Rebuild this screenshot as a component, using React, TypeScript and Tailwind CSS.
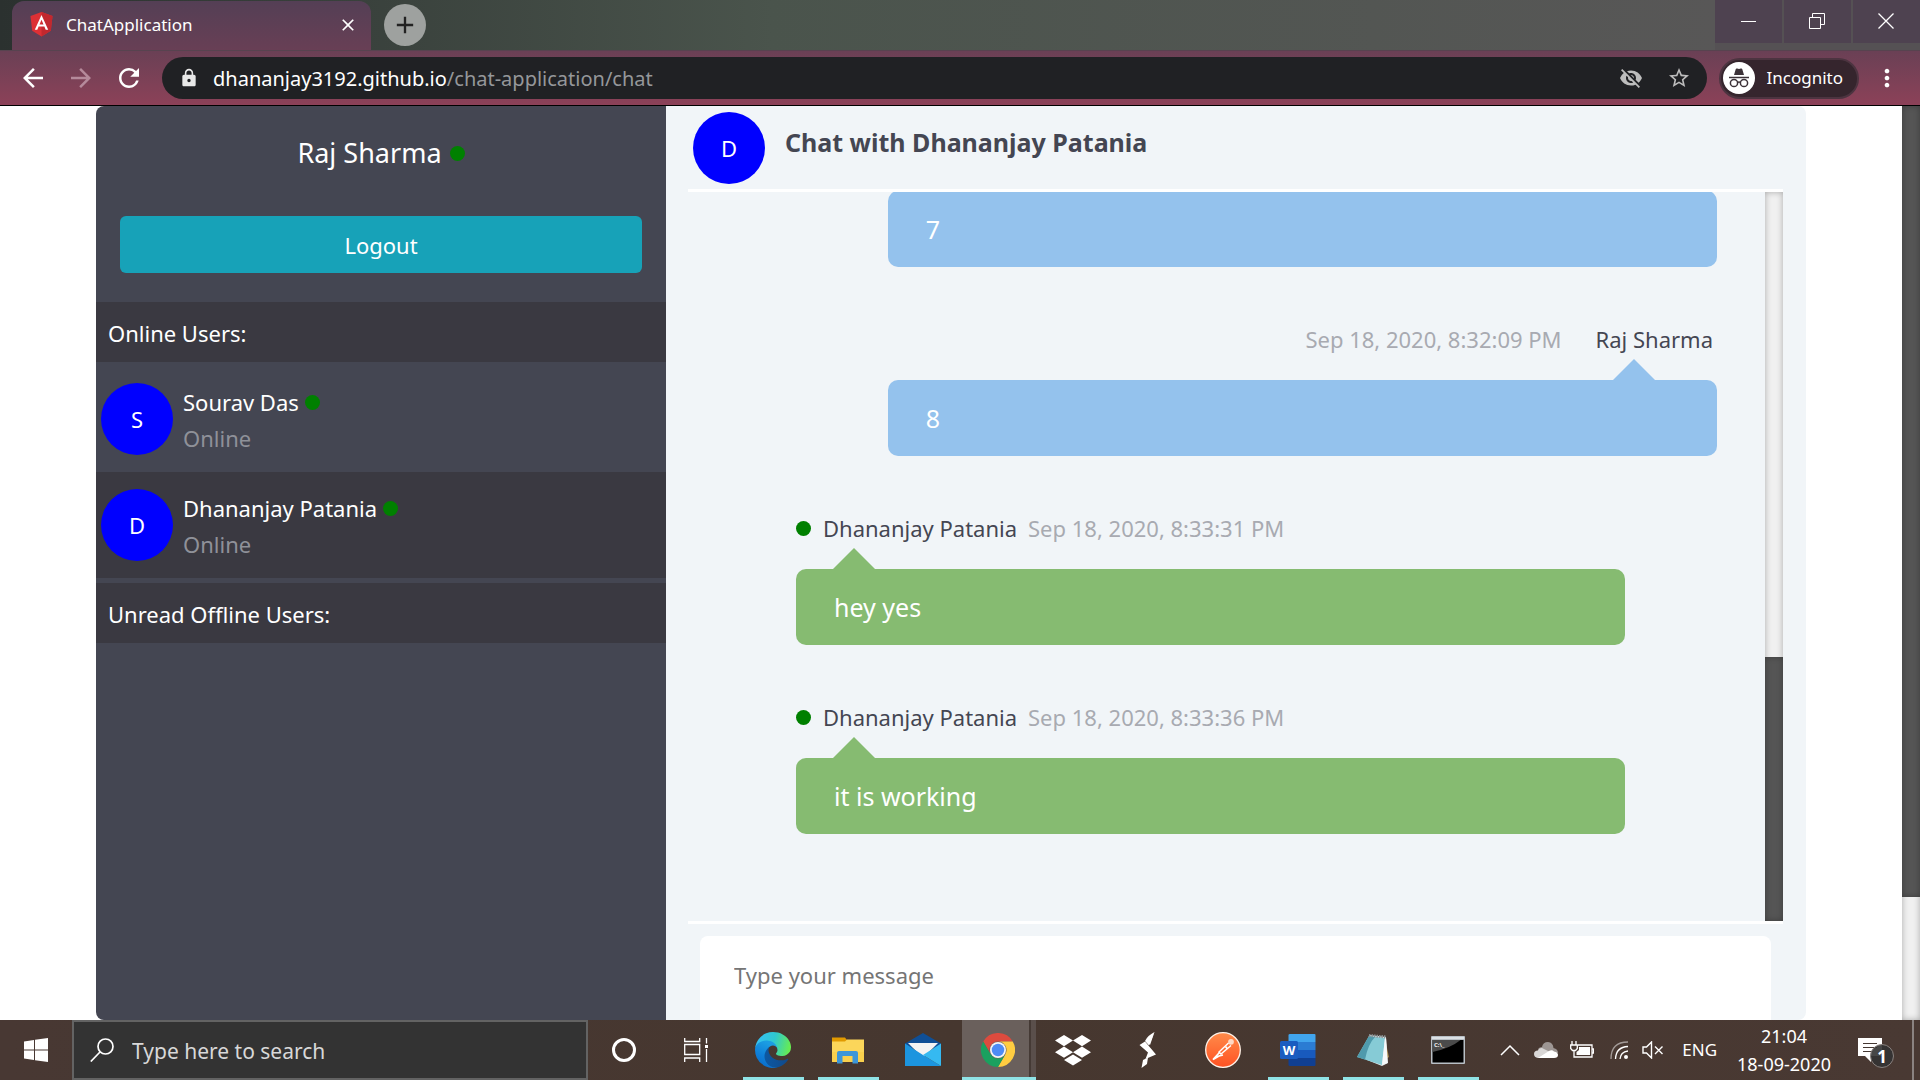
import React from "react";
import { MdArrowBack, MdArrowForward, MdRefresh, MdLock, MdVisibilityOff, MdStarBorder, MdMoreVert, MdClose, MdAdd } from "react-icons/md";

const Dot = () => <span className="inline-block size-[15px] shrink-0 rounded-full bg-[#008000]" />;

const Avatar = ({ letter }: { letter: string }) => (
  <span className="flex size-18 shrink-0 items-center justify-center rounded-full bg-[#0000ff] text-[22px] text-white">
    {letter}
  </span>
);

/* ---------- Browser chrome ---------- */

const AngularIcon = () => (
  <svg viewBox="0 0 24 26" className="h-[25px] w-[23px]">
    <path d="M12 0 23.5 4 21.7 19.5 12 25.5 2.3 19.5.5 4Z" fill="#dd3035" />
    <path d="M12 0 23.5 4 21.7 19.5 12 25.5Z" fill="#c2282e" />
    <path
      fillRule="evenodd"
      d="M12 3 5 18.5h2.6L9 15h6l1.400 3.500H19ZM12 8l2.100 4.900H9.900Z"
      fill="#fff"
    />
  </svg>
);

const IncognitoIcon = () => (
  <svg viewBox="0 0 32 32" className="size-8">
    <circle cx="16" cy="16" r="16" fill="#fff" />
    <path d="M11 13 12.700 7.200q.4-1.100 1.500-.6l1.800.5 1.800-.5q1.100-.5 1.500.6L21 13Z" fill="#3c3238" />
    <path d="M6 15.500h20" stroke="#3c3238" strokeWidth="1.500" />
    <g fill="none" stroke="#3c3238" strokeWidth="1.500">
      <circle cx="11" cy="21" r="3.600" />
      <circle cx="21" cy="21" r="3.600" />
      <path d="M14.500 20.500q1.500-1 3 0" />
    </g>
  </svg>
);

function TabStrip() {
  return (
    <div className="flex h-[50px] items-start bg-[#555154]">
      <div className="flex h-full min-w-0 flex-1 bg-linear-to-r from-[#2b312f] from-0% via-[#4a544c] via-45% to-[#585757]">
        <div className="mt-px ml-3 flex h-[49px] w-[359px] items-center rounded-t-xl bg-linear-to-b from-[#543f55] to-[#683f55] pr-[13px] pb-0.5 pl-[18px]">
          <AngularIcon />
          <span className="ml-[13px] flex-1 text-[17px] text-white">ChatApplication</span>
          <button aria-label="Close tab" className="text-white">
            <MdClose className="size-5" />
          </button>
        </div>
        <button
          aria-label="New tab"
          className="mt-1 ml-[13px] flex size-[42px] items-center justify-center rounded-full bg-[#9ea19f] text-[#222]"
        >
          <MdAdd className="size-7" />
        </button>
      </div>
      <div className="flex gap-0.5 text-white">
        <button aria-label="Minimize" className="flex h-[43px] w-[67px] items-center justify-center bg-[#4e4250] pb-0.5">
          <svg viewBox="0 0 16 16" className="size-4"><path d="M0 8.500h15" stroke="currentColor" /></svg>
        </button>
        <button aria-label="Restore" className="flex h-[43px] w-[67px] items-center justify-center bg-[#4e4250] pr-0.5 pb-0.5">
          <svg viewBox="0 0 16 16" className="size-4" fill="none" stroke="currentColor">
            <path d="M.5 4.500h11v11H.5ZM3.500 4V.5h12v11H12" />
          </svg>
        </button>
        <button aria-label="Close" className="flex h-[43px] w-[67px] items-center justify-center bg-[#4e4250] pr-0.5 pb-0.5">
          <svg viewBox="0 0 16 16" className="size-4"><path d="m.5.500 15 15m0-15-15 15" stroke="currentColor" strokeWidth="1.300" /></svg>
        </button>
      </div>
    </div>
  );
}

function Toolbar() {
  return (
    <div className="flex h-14 items-center border-t border-b border-t-[#57434f] border-b-black bg-linear-to-b from-[#6a4055] to-[#8c4158] pl-[18px] text-white">
      <button aria-label="Back"><MdArrowBack className="size-[30px]" /></button>
      <button aria-label="Forward" className="ml-[18px] text-[#b58a9b]"><MdArrowForward className="size-[30px]" /></button>
      <button aria-label="Reload" className="ml-[18px]"><MdRefresh className="size-[30px]" /></button>
      <div className="ml-[18px] flex h-[42px] flex-1 items-center rounded-full bg-[#202124] pr-4 pl-[17px]">
        <MdLock className="size-5 text-[#e8e8e8]" />
        <div role="textbox" aria-label="Address" className="ml-[14px] flex-1 pt-0.5 text-[20px] text-[#95979a]">
          <span className="text-white">dhananjay3192.github.io</span>/chat-application/chat
        </div>
        <button aria-label="Third-party cookies blocked" className="text-[#bdbdbd]"><MdVisibilityOff className="size-6" /></button>
        <button aria-label="Bookmark this page" className="ml-6 text-[#bdbdbd]"><MdStarBorder className="size-6" /></button>
      </div>
      <button className="ml-3 flex h-[41px] items-center gap-3 rounded-full border-2 border-[#4c3440] bg-[#35252d] pr-3.5 pl-0.5 text-[17px]">
        <IncognitoIcon />
        Incognito
      </button>
      <button aria-label="Menu" className="mr-[19px] ml-3.5"><MdMoreVert className="size-7" /></button>
    </div>
  );
}

/* ---------- Chat page ---------- */

const users = [
  { name: "Sourav Das", status: "Online", row: "h-[110px] pt-[21px]" },
  { name: "Dhananjay Patania", status: "Online", row: "h-[106px] bg-[#3a3941] pt-[17px]" },
];

function Sidebar() {
  return (
    <aside className="w-1/3 shrink-0 rounded-l-lg bg-[#444652] text-[22px] text-white">
      <div className="flex h-[196px] flex-col px-6 pt-7">
        <h1 className="flex items-center justify-center gap-2 text-[27px] leading-[38px]">
          Raj Sharma <Dot />
        </h1>
        <button className="mt-11 flex h-[57px] items-center justify-center rounded-md bg-[#17a2b8] pt-0.5">Logout</button>
      </div>
      <h2 className="flex h-[60px] items-center bg-[#3a3941] px-3 pt-0.5">Online Users:</h2>
      <ul>
        {users.map((u) => (
          <li key={u.name}>
            <button className={"flex w-full items-start gap-2.5 pl-[5px] text-left " + u.row}>
              <Avatar letter={u.name[0]} />
              <span className="flex flex-col pt-px leading-9">
                <span className="flex items-center gap-1.5">{u.name} <Dot /></span>
                <span className="text-[#8f9199]">{u.status}</span>
              </span>
            </button>
          </li>
        ))}
      </ul>
      <h2 className="mt-[5px] flex h-[60px] items-center bg-[#3a3941] px-3 pt-0.5">Unread Offline Users:</h2>
    </aside>
  );
}

type Message = { text: string; mine: boolean; author?: string; time?: string };

const messages: Message[] = [
  { text: "7", mine: true },
  { text: "8", mine: true, author: "Raj Sharma", time: "Sep 18, 2020, 8:32:09 PM" },
  { text: "hey yes", mine: false, author: "Dhananjay Patania", time: "Sep 18, 2020, 8:33:31 PM" },
  { text: "it is working", mine: false, author: "Dhananjay Patania", time: "Sep 18, 2020, 8:33:36 PM" },
];

function MessageItem({ m }: { m: Message }) {
  return (
    <li className={"mb-[45px] flex shrink-0 " + (m.mine ? "justify-end" : "justify-start")}>
      <div className={"w-[77%] " + (m.mine ? "mr-12" : "ml-[108px]")}>
        {m.author &&
          (m.mine ? (
            <div className="flex h-[68px] items-start justify-end gap-[34px] pt-[9px] pr-1 text-[22px] leading-9 text-[#444652]">
              <span className="text-[#a8aab1]">{m.time}</span>
              <span>{m.author}</span>
            </div>
          ) : (
            <div className="flex h-[68px] items-start pt-[9px] text-[22px] leading-9 text-[#444652]">
              <span className="flex h-9 items-center"><Dot /></span>
              <span className="ml-3">{m.author}</span>
              <span className="ml-[11px] text-[#a8aab1]">{m.time}</span>
            </div>
          ))}
        <div
          className={
            "relative flex h-[76px] items-center rounded-[10px] pt-0.5 pl-[38px] text-[25px] text-white " +
            (m.mine ? "bg-[#94c2ed]" : "bg-[#86bb71]")
          }
        >
          {m.author && (
            <span
              className={
                "absolute bottom-full border-x-[21px] border-b-[21px] border-x-transparent " +
                (m.mine ? "right-[62px] border-b-[#94c2ed]" : "left-[37px] border-b-[#86bb71]")
              }
            />
          )}
          {m.text}
        </div>
      </div>
    </li>
  );
}

function Chat() {
  return (
    <main className="flex min-w-0 flex-1 flex-col rounded-r-lg bg-[#f1f5f8] pr-[23px] pl-[22px]">
      <header className="flex h-[86px] shrink-0 items-start gap-5 border-b-[3px] border-white pt-1.5 pl-[5px]">
        <Avatar letter="D" />
        <h2 className="pt-3 text-[25px] leading-9 font-bold text-[#444652]">Chat with Dhananjay Patania</h2>
      </header>
      <div className="flex min-h-0 flex-1">
        <ul className="flex min-w-0 flex-1 flex-col justify-end overflow-hidden pb-[42px]">
          {messages.map((m) => <MessageItem key={m.text} m={m} />)}
        </ul>
        <div className="flex w-[18px] flex-col bg-[#f0f0f0] shadow-[inset_0_0_6px_rgba(0,0,0,0.3)]">
          <div className="mt-auto h-[264px] bg-[#555] shadow-[inset_0_0_6px_rgba(0,0,0,0.3)]" />
        </div>
      </div>
      <form className="flex h-[99px] shrink-0 border-t-[3px] border-white px-3 pt-3">
        <input
          aria-label="Message"
          placeholder="Type your message"
          className="min-w-0 flex-1 rounded-t-lg bg-white px-[34px] pb-1.5 text-[22px] outline-none placeholder:text-[#757575]"
        />
      </form>
    </main>
  );
}

/* ---------- Taskbar ---------- */

const EdgeIcon = () => (
  <svg viewBox="4.600 5 256 256" className="size-9">
    <defs>
      <linearGradient id="e1" x1="63" y1="178" x2="241" y2="178" gradientUnits="userSpaceOnUse"><stop stopColor="#0c59a4" /><stop offset="1" stopColor="#114a8b" /></linearGradient>
      <linearGradient id="e2" x1="120" y1="95" x2="50" y2="240" gradientUnits="userSpaceOnUse"><stop stopColor="#1b9de2" /><stop offset=".6" stopColor="#0f7fd8" /><stop offset="1" stopColor="#0a6fcb" /></linearGradient>
      <linearGradient id="e3" x1="20" y1="60" x2="250" y2="120" gradientUnits="userSpaceOnUse"><stop stopColor="#35c1f1" /><stop offset=".5" stopColor="#2fc8cf" /><stop offset="1" stopColor="#66eb52" /></linearGradient>
    </defs>
    <path fill="url(#e1)" d="M235.680 195.460a93.730 93.730 0 0 1-10.540 4.710 101.870 101.870 0 0 1-35.900 6.460c-47.320 0-88.540-32.550-88.540-74.320A31.480 31.480 0 0 1 117.130 105c-42.800 1.800-53.800 46.400-53.800 72.530 0 73.880 68.090 81.370 82.760 81.370 7.910 0 19.840-2.300 27-4.560l1.310-.44a128.340 128.340 0 0 0 66.600-52.800 4 4 0 0 0-5.320-5.640z" />
    <path fill="url(#e2)" d="M110.340 246.340A79.200 79.200 0 0 1 87.600 225a80.720 80.720 0 0 1 29.530-120c3.120-1.470 8.450-4.130 15.540-4a32.350 32.350 0 0 1 25.690 13 31.880 31.880 0 0 1 6.360 18.660c0-.21 24.460-79.600-80-79.600-43.900 0-80 41.660-80 78.210a130.150 130.150 0 0 0 12.110 56 128 128 0 0 0 156.380 67.110 75.550 75.550 0 0 1-62.780-8z" />
    <path fill="url(#e3)" d="M156.940 153.460c-.81 1.050-3.300 2.500-3.300 5.660 0 2.610 1.700 5.120 4.720 7.230 14.380 10 41.490 8.680 41.560 8.680a59.560 59.560 0 0 0 30.270-8.350 61.380 61.380 0 0 0 30.430-52.880c.26-22.410-8-37.310-11.340-43.910C228.090 28.760 182.350 5 132.610 5a128 128 0 0 0-128 126.200c.48-36.540 36.800-66.050 80-66.050 3.500 0 23.460.34 42 10.070 16.340 8.580 24.900 18.940 30.850 29.210 6.180 10.670 7.280 24.150 7.280 29.520s-2.740 13.330-7.800 19.510z" />
  </svg>
);

const FolderIcon = () => (
  <svg viewBox="0 0 36 36" className="size-9">
    <path d="M2 5.500h13l2 2.500v4H2Z" fill="#e19a00" />
    <path d="M2 9.500h13l2-2h17V30H2Z" fill="#fbd65a" />
    <path d="M2 20h32v10H2Z" fill="#f9cb45" opacity=".6" />
    <path d="M7 31.500V21q0-2 2-2h17q2 0 2 2v10.500h-5.500V24h-10v7.500Z" fill="#3c96d8" />
  </svg>
);

const MailIcon = () => (
  <svg viewBox="0 0 36 36" className="size-9">
    <path d="M0 11.500 18 1l18 10.500V16H0Z" fill="#0f4f96" />
    <path d="M3 11h30L18 26Z" fill="#f3f3f3" />
    <path d="M0 11.500 18 23 36 34H0Z" fill="#1c95df" />
    <path d="M36 11.500V34L18 23Z" fill="#35b9f1" />
  </svg>
);

const ChromeIcon = () => (
  <svg viewBox="0 0 48 48" className="size-[34px]">
    <path fill="#dc4b3e" d="M24 12H44.800A24 24 0 0 0 3.200 12L13.600 30A12 12 0 0 1 24 12Z" />
    <path fill="#ffcd41" d="M44.800 12A24 24 0 0 1 24 48L34.400 30A12 12 0 0 0 24 12Z" />
    <path fill="#1aa15f" d="M3.200 12A24 24 0 0 0 24 48L34.400 30A12 12 0 0 1 13.600 30Z" />
    <circle cx="24" cy="24" r="11.300" fill="#f4f4f4" />
    <circle cx="24" cy="24" r="8.800" fill="#4d8bf5" />
  </svg>
);

const DropboxIcon = () => (
  <svg viewBox="0 0 36 32" className="h-8 w-9" fill="#fff">
    <path d="m9 1 9 5.500-9 5.700L0 6.500ZM27 1l9 5.500-9 5.700-9-5.700ZM9 12.500l9 5.700-9 5.600-9-5.600ZM27 12.500l9 5.700-9 5.600-9-5.600ZM18 20.400l9 5.500-9 5.600-9-5.600Z" />
  </svg>
);

const BoltIcon = () => (
  <svg viewBox="0 0 18 36" className="h-9 w-[18px]" fill="#fff">
    <path d="M6 9.500.5 13 9 20.500 6.500 27 17 22.500Z" />
    <path d="M15.500 0Q8.500 3.500 6 9l4 4.500Z" />
    <path d="M15.500 0 11 13l-1.500-2Z" />
    <path d="M2.500 36 4 28 9 25.500 8 32Z" />
  </svg>
);

const PostmanIcon = () => (
  <svg viewBox="0 0 36 36" className="size-9">
    <defs><linearGradient id="pm" x1="0" y1="0" x2="0" y2="1"><stop stopColor="#ff8b4a" /><stop offset="1" stopColor="#ff5223" /></linearGradient></defs>
    <circle cx="18" cy="18" r="17.300" fill="url(#pm)" stroke="#fff2e8" strokeWidth="1.300" />
    <circle cx="26" cy="9.800" r="2.900" fill="#ffd9c4" />
    <path d="M23.500 11 14 20l2 2 10-8.500" fill="none" stroke="#fff" strokeWidth="1.400" />
    <path d="m20.500 14.500 2 2.500M14.500 20.500 8 27.500l6-3.500 4-1" fill="none" stroke="#fff" strokeWidth="1.700" />
  </svg>
);

const WordIcon = () => (
  <svg viewBox="0 0 36 36" className="size-9">
    <path d="M10 2h24.500q1 0 1 1v7H8.500V3q0-1 1.500-1Z" fill="#41a5ee" />
    <path d="M8.500 10h27v8h-27Z" fill="#2b7cd3" />
    <path d="M8.500 18h27v8h-27Z" fill="#185abd" />
    <path d="M8.500 26h27v7q0 1-1 1H10q-1.500 0-1.500-1Z" fill="#103f91" />
    <rect y="9" width="18" height="18" rx="1.500" fill="#1a5cc0" />
    <text x="9" y="22.500" textAnchor="middle" fontSize="13" fontWeight="700" fill="#fff">W</text>
  </svg>
);

const NotepadIcon = () => (
  <svg viewBox="0 0 36 36" className="size-9">
    <path d="m30 7 4 18-6 4Z" fill="#a98a4b" />
    <path d="M14 3 31 5 33 31 27 34 12 28Z" fill="#e4eaec" />
    <path d="M14 4 30 6 27 33 2 25Z" fill="#86cbd6" />
    <path d="M14 4 2 25l8 2.500Q13 12 20 5Z" fill="#4f9aac" />
    <path d="M30 6 27 33l5.500-2L31 6Z" fill="#f7f9fa" />
    <path d="M14 3.500 31 5" stroke="#8a9396" strokeWidth="3" strokeDasharray="1.500 1" />
  </svg>
);

const CmdIcon = () => (
  <svg viewBox="0 0 34 28" className="h-7 w-[34px]">
    <rect width="34" height="28" rx="1" fill="#b9c0c6" />
    <path d="M1 1h32v2H1Z" fill="#dce1e5" />
    <path d="M1.500 4h31v22.500h-31Z" fill="#000" />
    <path d="M1.500 4h28Q20 12 1.500 16Z" fill="#4b4b4b" />
    <text x="3" y="10.500" fontSize="6" fontWeight="700" fill="#eee">C:\_</text>
  </svg>
);

const apps = [
  { name: "Microsoft Edge", icon: <EdgeIcon />, open: true },
  { name: "File Explorer", icon: <FolderIcon />, open: true },
  { name: "Mail", icon: <MailIcon />, open: false },
  { name: "Google Chrome", icon: <ChromeIcon />, open: true, active: true },
  { name: "Dropbox", icon: <DropboxIcon />, open: false },
  { name: "Streaming", icon: <BoltIcon />, open: false },
  { name: "Postman", icon: <PostmanIcon />, open: false },
  { name: "Word", icon: <WordIcon />, open: true },
  { name: "Notepad", icon: <NotepadIcon />, open: true },
  { name: "Command Prompt", icon: <CmdIcon />, open: true },
];

function Taskbar() {
  return (
    <footer className="flex h-15 shrink-0 items-stretch bg-linear-to-r from-[#483833] via-[#46372f] via-50% to-[#493933] text-white">
      <button aria-label="Start" className="flex w-18 items-center justify-center">
        <svg viewBox="0 0 24 24" className="size-6" fill="#fff">
          <path d="M0 3.400 10 2v9.500H0ZM11 1.800 24 0v11.500H11ZM0 12.500h10V22L0 20.600ZM11 12.500h13V24l-13-1.800Z" />
        </svg>
      </button>
      <label className="flex w-[516px] items-center border-2 border-[#636363] bg-[#333] pl-4">
        <svg viewBox="0 0 24 24" className="size-6 shrink-0" fill="none" stroke="#fff" strokeWidth="1.700">
          <circle cx="15.500" cy="8.500" r="7.500" />
          <path d="M10 14 .8 23.500" />
        </svg>
        <input aria-label="Search" placeholder="Type here to search" className="ml-[18px] min-w-0 flex-1 pt-1 text-[21px] outline-none placeholder:text-[#d8d8d8]" />
      </label>
      <button aria-label="Cortana" className="flex w-[72px] items-center justify-center">
        <span className="size-6 rounded-full border-[3px] border-white" />
      </button>
      <button aria-label="Task View" className="flex w-[72px] items-center justify-center">
        <svg viewBox="0 0 24 24" className="size-6" fill="none" stroke="#fff" strokeWidth="1.300">
          <path d="M.7 0v3.500h15V0M.7 6.500h15v10H.7ZM.7 24v-4h15v4M22.500 0v5.500M22.500 11v13" />
          <path d="M21 7h3v3h-3Z" fill="#fff" stroke="none" />
        </svg>
      </button>
      <nav className="ml-[3px] flex">
        {apps.map((a) => (
          <button key={a.name} aria-label={a.name} className="relative flex w-[75px] items-center justify-center">
            {a.active && (
              <span className="absolute inset-y-0 -right-px left-[2px] flex">
                <span className="flex-1 bg-[#6a605c]" />
                <span className="w-0.5 bg-[#453a35]" />
                <span className="w-[5px] bg-[#5a4f4b]" />
              </span>
            )}
            <span className="relative">{a.icon}</span>
            {a.open && (
              <span className={"absolute bottom-0 h-[3px] bg-[#8fe3e6] " + (a.active ? "-right-px left-[2px]" : "right-[6px] left-[8px]")} />
            )}
          </button>
        ))}
      </nav>
      <div className="ml-auto flex items-center">
        <button aria-label="Show hidden icons">
          <svg viewBox="0 0 20 12" className="h-3 w-5" fill="none" stroke="#fff" strokeWidth="1.500"><path d="m1 11 9-9 9 9" /></svg>
        </button>
        <svg viewBox="0 0 24 16" className="ml-3.5 h-4 w-6">
          <path d="M4 11Q3 5 8 5q1-5 6-5 5 .5 5.500 6Q24 7 24 11Z" fill="#9d9693" />
          <path d="M4 16q-4-.5-4-4t4-3.500q1-3 4-2.500l8 4-8 6Z" fill="#d9d7d6" />
          <path d="M4 16 15 9q3-1.500 5 .5 4 .5 4 3.500t-4 3Z" fill="#fff" />
        </svg>
        <svg viewBox="0 0 24 18" className="ml-3 h-[18px] w-6" fill="none" stroke="#fff" strokeWidth="1.300">
          <path d="M8 4h14v12H4v-5M22 8h1.500v4H22M2 0v4M6 0v4M.7 4h6.600v3.500L5.500 9.500h-3L.7 7.500ZM4 9.500V12" />
          <path d="M9 6h11v8H6.500v-3L9 9Z" fill="#fff" stroke="none" />
        </svg>
        <svg viewBox="0 0 18 18" className="ml-4 size-[18px]" fill="none" stroke="#fff" strokeWidth="1.300">
          <path d="M1 18Q1 1 18 1" stroke="#a39b98" />
          <path d="M5.500 18Q6 6 18 5.500M10 18q.5-7 8-8" />
          <circle cx="16" cy="16" r="2" fill="#fff" stroke="none" />
        </svg>
        <svg viewBox="0 0 22 18" className="ml-3.5 h-[18px] w-[22px]" fill="none" stroke="#fff" strokeWidth="1.400">
          <path d="M1 6h3.500l5-5v16l-5-5H1ZM13 5.500l7.500 7.500m0-7.500L13 13" />
        </svg>
        <span className="ml-[18px] text-[17px]">ENG</span>
        <div className="ml-5 flex flex-col items-center text-[18px] leading-7">
          <span>21:04</span>
          <span>18-09-2020</span>
        </div>
        <button aria-label="1 new notification" className="relative ml-[27px] h-9 w-9">
          <svg viewBox="0 0 24 24" className="size-6"><path d="M0 0h24v18H13v6l-6-6H0Z" fill="#fff" /><path d="M5 5.500h14M5 9.500h14M5 13.500h9" stroke="#453833" strokeWidth="1.200" /></svg>
          <span className="absolute right-0 bottom-0 flex size-6 items-center justify-center rounded-full border border-[#8a827f] bg-[#333]/90 text-[17px] leading-none font-bold">1</span>
        </button>
        <span className="mr-1.5 ml-[18px] h-15 w-0.5 bg-[#8b8381]" />
      </div>
    </footer>
  );
}

export default function App() {
  return (
    <div className="flex h-screen flex-col overflow-hidden bg-white font-['Noto_Sans','Open_Sans',sans-serif]">
      <TabStrip />
      <Toolbar />
      <div className="flex min-h-0 flex-1">
        <div className="flex min-w-0 flex-1 justify-center px-24">
          <div className="flex w-full max-w-[1710px]">
            <Sidebar />
            <Chat />
          </div>
        </div>
        <div className="w-[18px] shrink-0 bg-[#f0f0f0] shadow-[inset_0_0_6px_rgba(0,0,0,0.3)]">
          <div className="h-[791px] bg-[#555] shadow-[inset_0_0_6px_rgba(0,0,0,0.3)]" />
        </div>
      </div>
      <Taskbar />
    </div>
  );
}
